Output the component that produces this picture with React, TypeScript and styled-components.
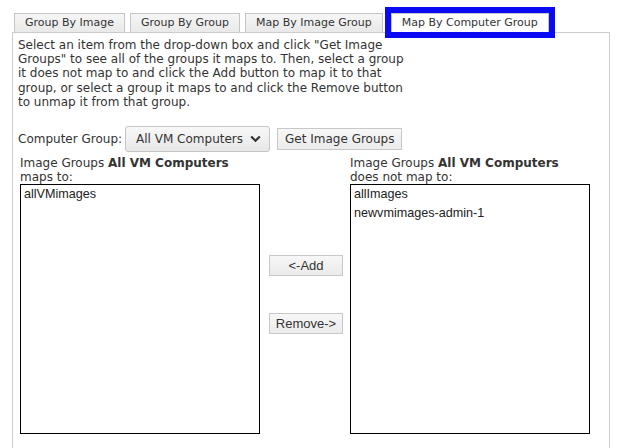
import React from "react";
import styled, { createGlobalStyle } from "styled-components";

const GlobalStyle = createGlobalStyle`
  html, body {
    margin: 0;
    padding: 0;
    background: #ffffff;
  }
  body {
    font-family: "DejaVu Sans", "Liberation Sans", sans-serif;
    font-size: 12px;
    color: #333333;
    overflow: hidden;
  }
`;

const Page = styled.div`
  padding: 13px 0 0 12px;
  width: 598px;
`;

const TabBar = styled.div`
  display: flex;
  align-items: flex-end;
  gap: 5px;
  padding-left: 2px;
`;

const Tab = styled.div<{ $active?: boolean }>`
  box-sizing: border-box;
  height: 19px;
  padding: 0 10px;
  border: 1px solid #c5c5c5;
  border-bottom: none;
  background: ${(p) =>
    p.$active ? "#ffffff" : "linear-gradient(#f6f6f6, #e9e9e9)"};
  font-size: 11px;
  line-height: 18px;
  color: #333333;
  white-space: nowrap;
  margin-left: ${(p) => (p.$active ? "3px" : "0")};
  outline: ${(p) => (p.$active ? "6px solid #0a0af5" : "none")};
  position: relative;
  z-index: ${(p) => (p.$active ? 1 : 0)};
`;

const Panel = styled.div`
  box-sizing: border-box;
  border: 1px solid #cccccc;
  border-bottom: none;
  height: 420px;
  padding: 5px 0 0 5px;
`;

const Intro = styled.p`
  margin: 0;
  width: 392px;
  font-size: 12px;
  line-height: 14.2px;
`;

const PickRow = styled.div`
  display: flex;
  align-items: center;
  margin-top: 17px;
  height: 26px;
`;

const Label = styled.span`
  margin-right: 3px;
`;

const DropDown = styled.div`
  box-sizing: border-box;
  display: flex;
  align-items: center;
  gap: 7px;
  height: 26px;
  padding: 0 8px 0 10px;
  border: 1px solid #c5c5c5;
  border-radius: 3px;
  background: linear-gradient(#f8f8f8, #e7e7e7);
  color: #333333;
`;

const PlainButton = styled.div`
  box-sizing: border-box;
  display: inline-flex;
  align-items: center;
  justify-content: center;
  height: 22px;
  padding: 0 7px;
  border: 1px solid #c8c8c8;
  background: linear-gradient(#f7f7f7, #ebebeb);
  color: #333333;
  white-space: nowrap;
`;

const GetButton = styled(PlainButton)`
  margin-left: 7px;
`;

const MoveButton = styled(PlainButton)`
  font-family: "Liberation Sans", Arial, sans-serif;
  font-size: 13px;
  width: 74px;
  height: 21px;
`;

const MapTable = styled.div`
  display: grid;
  grid-template-columns: 240px 90px 240px;
  margin-top: 4px;
  padding-left: 2px;
`;

const Column = styled.div`
  display: flex;
  flex-direction: column;
`;

const ColumnTitle = styled.div`
  line-height: 14px;
  height: 28px;
  white-space: nowrap;
  b {
    font-weight: bold;
  }
`;

const ListBox = styled.div`
  box-sizing: border-box;
  width: 240px;
  height: 250px;
  border: 1px solid #000000;
  padding: 0 3px;
  font-family: "Liberation Sans", Arial, sans-serif;
  font-size: 12.6px;
  color: #222222;
`;

const ListItem = styled.div`
  height: 19px;
  line-height: 19px;
`;

const Middle = styled.div`
  display: flex;
  flex-direction: column;
  align-items: flex-start;
  gap: 37px;
  padding: 99px 0 0 9px;
`;

const Chevron = () => (
  <svg width="11" height="8" viewBox="0 0 11 8">
    <path d="M1.2 1.5 L5.5 5.8 L9.8 1.5" fill="none" stroke="#333" strokeWidth="2.2" />
  </svg>
);

export default function App() {
  return (
    <>
      <GlobalStyle />
      <Page>
        <TabBar>
          <Tab>Group By Image</Tab>
          <Tab>Group By Group</Tab>
          <Tab>Map By Image Group</Tab>
          <Tab $active>Map By Computer Group</Tab>
        </TabBar>
        <Panel>
          <Intro>
            Select an item from the drop-down box and click "Get Image Groups" to see all of the
            groups it maps to. Then, select a group it does not map to and click the Add button to
            map it to that group, or select a group it maps to and click the Remove button to unmap
            it from that group.
          </Intro>
          <PickRow>
            <Label>Computer Group:</Label>
            <DropDown>
              All VM Computers <Chevron />
            </DropDown>
            <GetButton>Get Image Groups</GetButton>
          </PickRow>
          <MapTable>
            <Column>
              <ColumnTitle>
                Image Groups <b>All VM Computers</b>
                <br />
                maps to:
              </ColumnTitle>
              <ListBox>
                <ListItem>allVMimages</ListItem>
              </ListBox>
            </Column>
            <Middle>
              <MoveButton>&lt;-Add</MoveButton>
              <MoveButton>Remove-&gt;</MoveButton>
            </Middle>
            <Column>
              <ColumnTitle>
                Image Groups <b>All VM Computers</b>
                <br />
                does not map to:
              </ColumnTitle>
              <ListBox>
                <ListItem>allImages</ListItem>
                <ListItem>newvmimages-admin-1</ListItem>
              </ListBox>
            </Column>
          </MapTable>
        </Panel>
      </Page>
    </>
  );
}
